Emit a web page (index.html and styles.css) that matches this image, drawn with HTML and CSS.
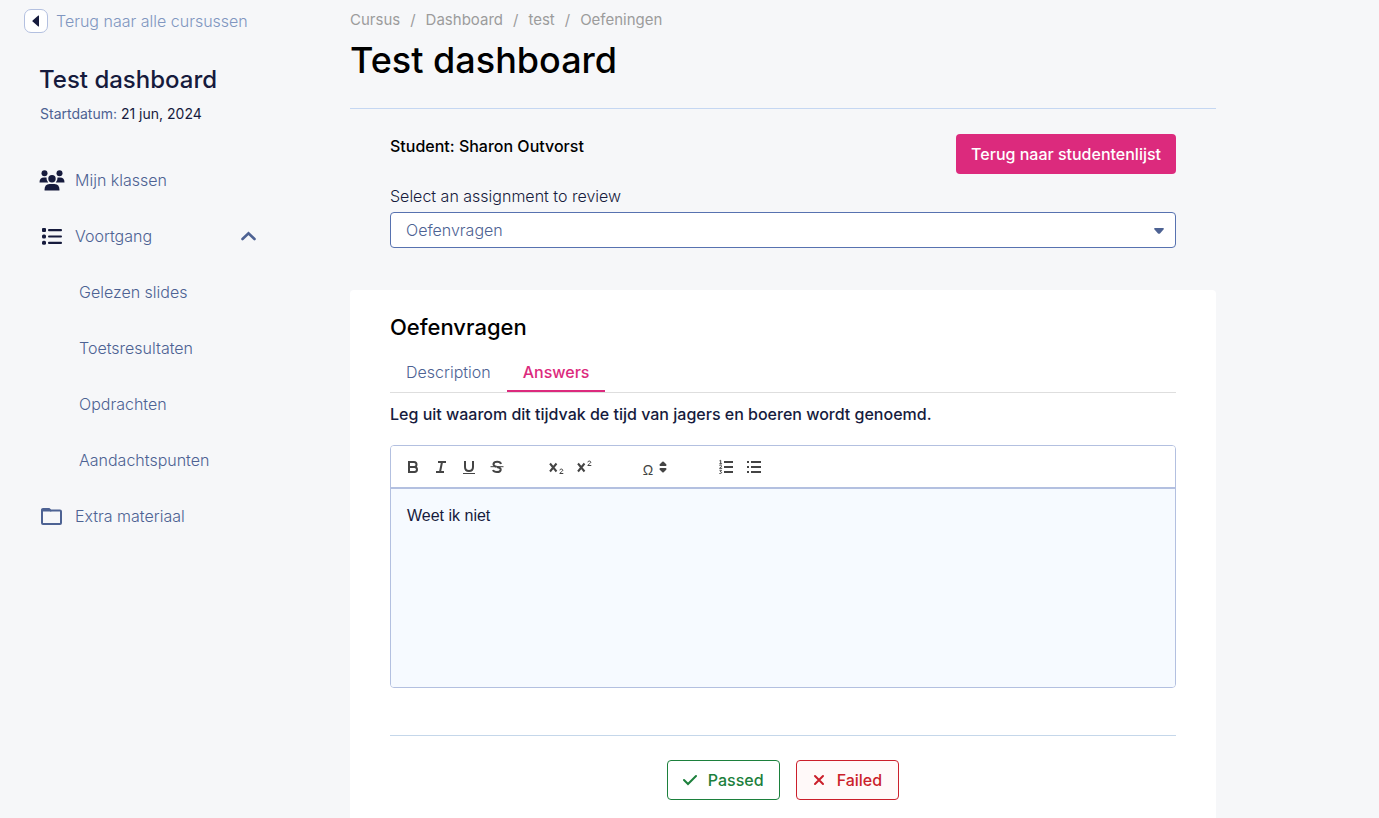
FILE: index.html
```html
<!DOCTYPE html>
<html lang="nl">
<head>
<meta charset="utf-8">
<meta name="viewport" content="width=device-width, initial-scale=1">
<title>Test dashboard</title>
<link rel="stylesheet" href="styles.css">
</head>
<body>
<div class="page">
  <aside class="sidebar">
    <a class="back-link" href="#">
      <span class="back-icon"><svg width="8" height="12" viewBox="0 0 8 12" aria-hidden="true"><path d="M6.300 .6Q7 .2 7 1V11Q7 11.800 6.300 11.400L.6 6.500Q.1 6 .6 5.500Z" fill="#161b3d"/></svg></span>
      Terug naar alle cursussen
    </a>
    <h2 class="course-title">Test dashboard</h2>
    <p class="course-date">Startdatum: <span class="date-value">21 jun, 2024</span></p>
    <nav class="menu">
      <a class="menu-item" href="#">
        <svg class="menu-icon" width="26" height="22" viewBox="0 0 26 22" fill="#161b3d" aria-hidden="true"><circle cx="5.500" cy="4.200" r="3"/><circle cx="20.500" cy="4.200" r="3"/><circle cx="13" cy="9.800" r="3.700"/><path d="M.5 13.500Q.5 8.500 5 8.500h2.500Q7.300 11.500 9.200 13.500ZM25.500 13.500Q25.500 8.500 21 8.500h-2.500Q18.700 11.500 16.800 13.500ZM5.500 21Q5.500 15 10.500 15h5Q20.500 15 20.500 21 20.500 21.500 20 21.500H6Q5.500 21.500 5.500 21Z"/></svg>
        <span>Mijn klassen</span>
      </a>
      <button class="menu-item" type="button" aria-expanded="true">
        <svg class="menu-icon" width="26" height="22" viewBox="0 0 26 22" fill="#161b3d" aria-hidden="true"><rect x="3" y="3" width="4" height="4" rx="1"/><rect x="3" y="9.500" width="4" height="4" rx="1.500"/><rect x="3" y="15.700" width="4" height="4" rx="1.500"/><rect x="9" y="4" width="14" height="2.200" rx="1"/><rect x="9" y="10.400" width="14" height="2.200" rx="1"/><rect x="9" y="16.700" width="14" height="2.200" rx="1"/></svg>
        <span>Voortgang</span>
        <svg class="chevron" width="16" height="10" viewBox="0 0 16 10" aria-hidden="true"><path d="M2.500 8 8.500 2.200l6 5.800" fill="none" stroke="#4d6293" stroke-width="2.600" stroke-linecap="round"/></svg>
      </button>
      <a class="menu-item sub-item" href="#">Gelezen slides</a>
      <a class="menu-item sub-item" href="#">Toetsresultaten</a>
      <a class="menu-item sub-item" href="#">Opdrachten</a>
      <a class="menu-item sub-item" href="#">Aandachtspunten</a>
      <a class="menu-item" href="#">
        <svg class="menu-icon" width="26" height="22" viewBox="0 0 26 22" aria-hidden="true"><path d="M4 4h6l1.700 1.500H21a1 1 0 0 1 1 1V18a1 1 0 0 1-1 1H4a1 1 0 0 1-1-1V5a1 1 0 0 1 1-1Z" fill="none" stroke="#4d6293" stroke-width="2"/><path d="M2.500 4h8l2 2.500h-10Z" fill="#4d6293"/></svg>
        <span>Extra materiaal</span>
      </a>
    </nav>
  </aside>
  <main class="main">
    <nav class="breadcrumb" aria-label="Breadcrumb">
      <a href="#">Cursus</a><span>/</span><a href="#">Dashboard</a><span>/</span><a href="#">test</a><span>/</span><a href="#">Oefeningen</a>
    </nav>
    <h1 class="page-title">Test dashboard</h1>
    <section class="review">
      <div class="review-head">
        <h2 class="student">Student: Sharon Outvorst</h2>
        <button class="primary" type="button">Terug naar studentenlijst</button>
      </div>
      <label class="select-label" for="assignment">Select an assignment to review</label>
      <div class="select-wrap">
        <select class="select" id="assignment"><option>Oefenvragen</option></select>
        <svg class="caret" width="10" height="6" viewBox="0 0 10 6" aria-hidden="true"><path d="M.8 0H9.200Q10.300 .4 9.500 1.500L6 5.400Q5 6.300 4 5.400L.5 1.500Q-.3 .4 .8 0Z" fill="#4d6293"/></svg>
      </div>
    </section>
    <section class="card">
      <h2 class="card-title">Oefenvragen</h2>
      <div class="tabs" role="tablist">
        <button class="tab" type="button" role="tab" aria-selected="false">Description</button>
        <button class="tab tab-active" type="button" role="tab" aria-selected="true">Answers</button>
      </div>
      <label class="question" for="answer">Leg uit waarom dit tijdvak de tijd van jagers en boeren wordt genoemd.</label>
      <div class="editor">
        <div class="toolbar">
          <div class="tool-group">
            <button class="tool" type="button" aria-label="Bold"><svg width="18" height="18" viewBox="0 0 18 18"><path d="M5 4h5a2.500 2.500 0 0 1 0 5H5zM5 9h5.500a2.500 2.500 0 0 1 0 5H5z"/></svg></button>
            <button class="tool" type="button" aria-label="Italic"><svg width="18" height="18" viewBox="0 0 18 18"><path d="M6 4h8M4 14h8M10 4 8 14"/></svg></button>
            <button class="tool" type="button" aria-label="Underline"><svg width="18" height="18" viewBox="0 0 18 18"><path d="M5 3v6c0 5.300 8 5.300 8 0V3"/><path class="thin" d="M3 15.500h12"/></svg></button>
            <button class="tool" type="button" aria-label="Strike"><svg width="18" height="18" viewBox="0 0 18 18"><path class="thin" d="M2.500 8.700h13"/><path d="M13 6C12.300 3 6 3 5.500 6c-.2 1.400 1 2.200 3 2.700M9 9c2.600.5 4 1.300 3.700 3C12 14.800 6 14.800 5 12"/></svg></button>
          </div>
          <div class="tool-group">
            <button class="tool" type="button" aria-label="Subscript"><svg width="18" height="18" viewBox="0 0 18 18"><path d="M2 5.500l6.500 8M8.500 5.500l-6.500 8"/><path class="thin" d="M11.800 12.300c0-1.700 3-1.700 3 0 0 1-3 2.200-3 3.200h3.500"/></svg></button>
            <button class="tool" type="button" aria-label="Superscript"><svg width="18" height="18" viewBox="0 0 18 18"><path d="M2 5.500l6.500 8M8.500 5.500l-6.500 8"/><path class="thin" d="M11.800 4.300c0-1.700 3-1.700 3 0 0 1-3 2.200-3 3.200h3.500"/></svg></button>
          </div>
          <div class="tool-group">
            <button class="tool symbol" type="button" aria-label="Special characters"><span class="omega">Ω</span><svg width="10" height="18" viewBox="0 0 10 18"><path class="solid" d="M2.500 7 5 4.500l2.500 2.500zM2.500 11 5 13.500l2.500-2.500z"/></svg></button>
          </div>
          <div class="tool-group">
            <button class="tool" type="button" aria-label="Ordered list"><svg width="18" height="18" viewBox="0 0 18 18"><path d="M7 4h9M7 9h9M7 14h9"/><path class="thin" d="M2.500 2.800 3.700 2.300v3.500M2.300 5.800h2.800M2.500 7.500c1-.8 2.600 0 2 1L2.500 10.300h2.700M2.500 12.300h2L3.300 13.700c2 0 1.700 2.300-.9 1.800"/></svg></button>
            <button class="tool" type="button" aria-label="Bullet list"><svg width="18" height="18" viewBox="0 0 18 18"><path d="M6 4h10M6 9h10M6 14h10M2 4h2M2 9h2M2 14h2"/></svg></button>
          </div>
        </div>
        <textarea class="answer" id="answer">Weet ik niet</textarea>
      </div>
      <div class="actions">
        <button class="verdict passed" type="button"><svg width="14" height="12" viewBox="0 0 14 12" aria-hidden="true"><path d="M1 6l4 4 8-8" fill="none" stroke="currentColor" stroke-width="2" stroke-linecap="round"/></svg>Passed</button>
        <button class="verdict failed" type="button"><svg width="12" height="12" viewBox="0 0 12 12" aria-hidden="true"><path d="M2 2l8 8M10 2l-8 8" fill="none" stroke="currentColor" stroke-width="2" stroke-linecap="round"/></svg>Failed</button>
      </div>
    </section>
  </main>
</div>
</body>
</html>
```
FILE: styles.css
```css
* { box-sizing: border-box; }

body {
  margin: 0;
  background: #f6f7f9;
  color: #161b3d;
  font: 300 16px/24px Inter, "Liberation Sans", sans-serif;
}

h1, h2, p { margin: 0; }
a { color: inherit; text-decoration: none; }
button, select, textarea { font: inherit; color: inherit; }
svg { display: block; flex: none; }

.page {
  display: grid;
  grid-template-columns: 256px minmax(0, 1fr);
  column-gap: 94px;
  min-height: 100vh;
  padding-right: 163px;
}

.sidebar { padding-top: 9px; }

.back-link {
  display: flex;
  align-items: center;
  gap: 8px;
  padding-left: 24px;
  color: #8096c0;
}

.back-icon {
  display: grid;
  place-items: center;
  width: 24px;
  height: 24px;
  border: 1px solid #b3c0e0;
  border-radius: 7px;
  background: #fff;
}

.course-title {
  margin: 31px 0 0 39px;
  font-size: 24px;
  line-height: 32px;
  font-weight: 500;
}

.course-date {
  margin: 6px 0 0 40px;
  color: #4d6293;
  font-size: 14px;
  font-weight: 400;
}

.date-value { color: #161b3d; }

.menu {
  display: flex;
  flex-direction: column;
  gap: 16px;
  margin-top: 34px;
}

.menu-item {
  display: flex;
  align-items: center;
  height: 40px;
  padding: 0 0 0 39px;
  border: 0;
  background: none;
  color: #4d6293;
  text-align: left;
}

.menu-icon { margin-right: 10px; }
.chevron { margin-left: auto; }
.sub-item { padding-left: 79px; }

.main {
  display: flex;
  flex-direction: column;
  padding-top: 8px;
}

.breadcrumb {
  display: flex;
  gap: 10px;
  color: #9c9c9c;
  font-size: 15px;
  font-weight: 400;
}

.page-title {
  padding: 4px 0 24px;
  border-bottom: 1px solid #c5d7f2;
  color: #000;
  font-size: 36px;
  line-height: 48px;
  font-weight: 500;
}

.review { padding: 25px 40px 42px; }

.review-head {
  display: flex;
  justify-content: space-between;
}

.student {
  color: #000;
  font-size: 16px;
  line-height: 24px;
  font-weight: 500;
}

.primary {
  height: 40px;
  padding: 0 15px;
  border: 0;
  border-radius: 4px;
  background: #dc2a7d;
  color: #fff;
  font-weight: 500;
}

.select-label {
  display: block;
  margin: 10px 0 4px;
}

.select-wrap { position: relative; }

.select {
  display: block;
  width: 100%;
  height: 36px;
  padding: 0 15px;
  border: 1px solid #5772b0;
  border-radius: 4px;
  appearance: none;
  background: #fff;
  color: #4d6293;
}

.caret {
  position: absolute;
  top: 16px;
  right: 12px;
  pointer-events: none;
}

.card {
  flex: 1;
  padding: 20px 40px 18px;
  border-radius: 4px 4px 0 0;
  background: #fff;
}

.card-title {
  color: #000;
  font-size: 22px;
  line-height: 34px;
  font-weight: 500;
}

.tabs {
  display: flex;
  height: 49px;
  border-bottom: 1px solid #dedede;
}

.tab {
  padding: 10px 16px 0;
  border: 0;
  border-bottom: 2px solid transparent;
  background: none;
  color: #4d6293;
}

.tab-active {
  border-bottom-color: #dc2a7d;
  color: #dc2a7d;
  font-weight: 500;
}

.question {
  display: block;
  margin: 9px 0 19px;
  font-weight: 500;
}

.editor {
  overflow: hidden;
  border: 1px solid #b3c0e0;
  border-radius: 4px;
}

.toolbar {
  display: flex;
  gap: 32px;
  height: 43px;
  padding: 9px 8px;
  border-bottom: 2px solid #b3c0e0;
  background: #fff;
}

.tool-group { display: flex; }

.tool {
  display: flex;
  align-items: center;
  justify-content: center;
  width: 28px;
  height: 24px;
  padding: 0;
  border: 0;
  background: none;
  color: #444;
}

.tool path {
  fill: none;
  stroke: #444;
  stroke-width: 2;
}

.tool .thin { stroke-width: 1; }
.tool .solid { fill: #444; stroke-linejoin: round; }

.symbol {
  gap: 5px;
  width: 49px;
}

.omega {
  padding-top: 5px;
  font: 14px/18px "Liberation Sans", sans-serif;
}

.answer {
  display: block;
  width: 100%;
  height: 198px;
  padding: 15px 16px;
  border: 0;
  outline: 0;
  resize: none;
  background: #f6faff;
  color: #161b3d;
  font-family: "Liberation Sans", Arial, sans-serif;
}

.actions {
  display: flex;
  justify-content: center;
  gap: 16px;
  margin-top: 47px;
  padding-top: 24px;
  border-top: 1px solid #c5d7ea;
}

.verdict {
  display: flex;
  align-items: center;
  height: 40px;
  padding: 0 15px;
  border: 1px solid currentColor;
  border-radius: 4px;
  background: #fff;
  font-weight: 500;
}

.passed { gap: 11px; color: #1c803c; }
.failed { gap: 12px; padding: 0 16px; background: #fff9f9; color: #cb1f2b; }
```
